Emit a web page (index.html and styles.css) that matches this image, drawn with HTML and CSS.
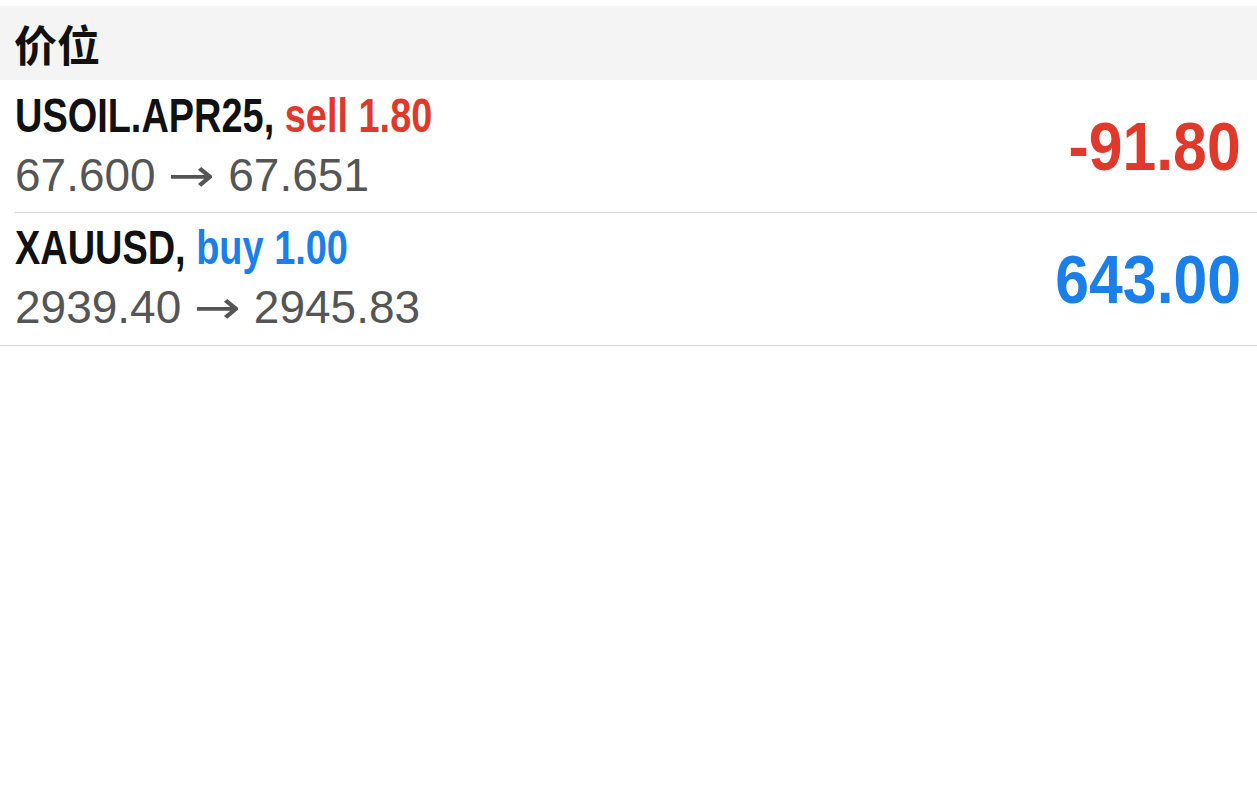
FILE: index.html
```html
<!DOCTYPE html>
<html>
<head>
<meta charset="utf-8">
<link rel="stylesheet" href="styles.css">
</head>
<body>
<div class="page">
  <div class="header">价位</div>
  <div class="list">
    <div class="row inset">
      <div class="info">
        <div class="title"><span class="squeeze">USOIL.APR25, <span class="sell">sell 1.80</span></span></div>
        <div class="prices">67.600 <span class="arrow"><span class="arrow-glyph">→</span></span> 67.651</div>
      </div>
      <div class="profit sell"><span class="squeeze-r">-91.80</span></div>
    </div>
    <div class="row full">
      <div class="info">
        <div class="title"><span class="squeeze">XAUUSD, <span class="buy">buy 1.00</span></span></div>
        <div class="prices">2939.40 <span class="arrow"><span class="arrow-glyph">→</span></span> 2945.83</div>
      </div>
      <div class="profit buy"><span class="squeeze-r">643.00</span></div>
    </div>
  </div>
</div>
</body>
</html>
```
FILE: styles.css
```css
html, body {
  margin: 0;
  padding: 0;
  background: #ffffff;
}
.page {
  width: 1257px;
  padding-top: 6px;
  font-family: "Liberation Sans", Arial, "Noto Sans CJK SC", sans-serif;
}
.header {
  height: 74px;
  background: #f4f4f4;
  padding-left: 14px;
  display: flex;
  align-items: center;
  font-family: "Noto Sans CJK SC", sans-serif;
  font-weight: 700;
  font-size: 43px;
  color: #111;
}
.row {
  height: 133px;
  display: flex;
  align-items: center;
  justify-content: space-between;
  padding: 0 16px 0 15px;
  position: relative;
  box-sizing: border-box;
}
.row.inset::after {
  content: "";
  position: absolute;
  left: 15px;
  right: 0;
  bottom: 0;
  height: 1px;
  background: #d6d6d6;
}
.row.full {
  border-bottom: 1px solid #d6d6d6;
}
.info {
  display: flex;
  flex-direction: column;
}
.title {
  font-weight: 700;
  font-size: 48px;
  line-height: 56px;
  color: #111;
  white-space: nowrap;
}
.squeeze {
  display: inline-block;
  transform: scaleX(0.79);
  transform-origin: left center;
}
.squeeze-r {
  display: inline-block;
  transform: scaleX(0.88);
  transform-origin: right center;
}
.prices {
  font-size: 46px;
  line-height: 62px;
  color: #555555;
  white-space: nowrap;
}
.arrow {
  display: inline-block;
  width: 47px;
}
.arrow-glyph {
  display: inline-block;
  font-family: "DejaVu Sans", sans-serif;
  transform: scaleX(1.22);
  transform-origin: left center;
}
.sell { color: #e0392b; }
.buy { color: #1a7fe8; }
.profit {
  font-weight: 700;
  font-size: 69px;
  white-space: nowrap;
}
```
